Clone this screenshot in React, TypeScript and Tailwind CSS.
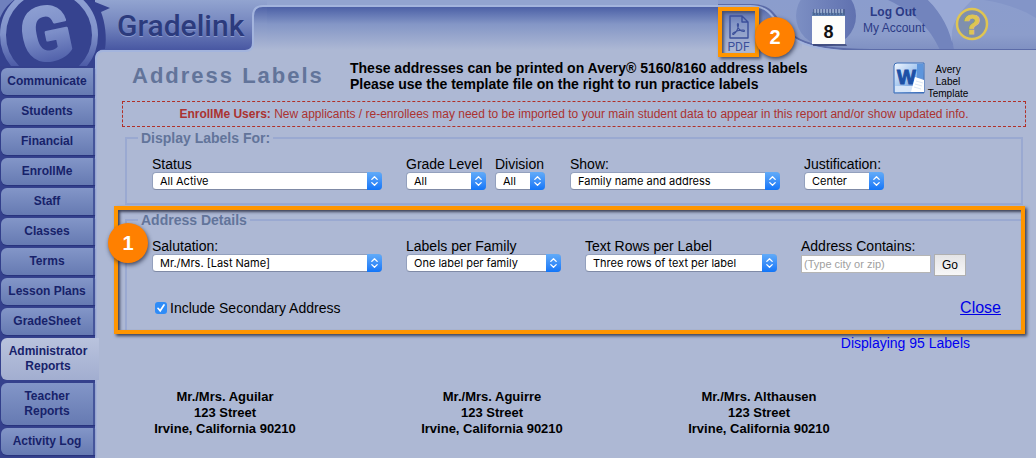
import React from 'react';
import clsx from 'clsx';

interface NavItem {
  label: string;
  active?: boolean;
}

const navItems: NavItem[] = [
  { label: 'Communicate' },
  { label: 'Students' },
  { label: 'Financial' },
  { label: 'EnrollMe' },
  { label: 'Staff' },
  { label: 'Classes' },
  { label: 'Terms' },
  { label: 'Lesson Plans' },
  { label: 'GradeSheet' },
  { label: 'Administrator Reports', active: true },
  { label: 'Teacher Reports' },
  { label: 'Activity Log' },
];

const families = ['Mr./Mrs. Aguilar', 'Mr./Mrs. Aguirre', 'Mr./Mrs. Althausen'];

interface SelectFieldProps {
  id: string;
  label: string;
  value: string;
  className: string;
}

const SelectField: React.FC<SelectFieldProps> = ({ id, label, value, className }) => (
  <div className={className}>
    <label htmlFor={id} className="block whitespace-nowrap text-[14px] leading-4">
      {label}
    </label>
    <div className="relative h-[18px]">
      <select
        id={id}
        className="block h-[18px] w-full appearance-none rounded-[4px] border border-[#93a0bd] border-b-[#7f8aa6] bg-white pr-4 pl-[7px] font-[Inter,sans-serif] text-[11px] leading-4 text-black"
      >
        <option>{value}</option>
      </select>
      <span className="pointer-events-none absolute top-0 right-0 flex h-[18px] w-[15px] items-center justify-center rounded-r-[4px] bg-linear-to-b from-[#62abf8] to-[#0f75f8]">
        <svg viewBox="0 0 9 12" className="h-3 w-[9px]" fill="none" stroke="white" strokeWidth="1.3" strokeLinecap="round" strokeLinejoin="round">
          <path d="M1.8 4.4 4.5 1.7 7.2 4.4M1.8 7.6l2.7 2.7 2.7-2.7" />
        </svg>
      </span>
    </div>
  </div>
);

const Badge: React.FC<{ children: React.ReactNode; className: string }> = ({ children, className }) => (
  <span
    className={clsx(
      'absolute z-20 flex size-10 items-center justify-center rounded-full bg-[#ff8000] text-[20px] font-bold text-white shadow-[1px_2px_4px_rgba(20,25,50,0.7)]',
      className
    )}
  >
    {children}
  </span>
);

const Logo = () => (
  <svg viewBox="0 0 120 66" className="pointer-events-none absolute top-0 left-0 z-20 h-[66px] w-[120px]" aria-hidden="true">
    <defs>
      <linearGradient id="logoRing" x1="0" y1="0" x2="0" y2="66" gradientUnits="userSpaceOnUse">
        <stop offset="0" stopColor="#8d9fd2" />
        <stop offset="0.5" stopColor="#8092ca" />
        <stop offset="1" stopColor="#4c5ba6" />
      </linearGradient>
      <linearGradient id="logoLetter" x1="0" y1="-30" x2="0" y2="30" gradientUnits="userSpaceOnUse">
        <stop offset="0" stopColor="#8d9fd2" />
        <stop offset="0.5" stopColor="#7c8ec8" />
        <stop offset="1" stopColor="#4f5fa9" />
      </linearGradient>
    </defs>
    <path d="M0 0h90l20 8-9 4c4 10 6 25 4 37-5 0-10 3-10 9v8H0z" fill="#35428f" />
    <circle cx="49" cy="35" r="46" fill="#36438f" stroke="url(#logoRing)" strokeWidth="6" />
    <path d="M0 0h14C7 5 3 11 0 18z" fill="#6f80bd" />
    <text
      x="0"
      y="26"
      transform="translate(46 34) rotate(-12)"
      textAnchor="middle"
      fontFamily="Roboto, sans-serif"
      fontWeight="700"
      fontSize="74"
      fill="url(#logoLetter)"
      stroke="url(#logoLetter)"
      strokeWidth="3"
      strokeLinejoin="round"
    >
      G
    </text>
  </svg>
);

// S-shaped step between the brand strip and the raised tab
const HeaderStep = () => (
  <svg viewBox="0 0 24 54" className="relative z-10 h-[54px] w-6 shrink-0" aria-hidden="true">
    <defs>
      <linearGradient id="stepBar" x1="0" y1="0" x2="0" y2="50" gradientUnits="userSpaceOnUse">
        <stop offset="0" stopColor="#92a4d0" />
        <stop offset="0.5" stopColor="#7485be" />
        <stop offset="1" stopColor="#4857a2" />
      </linearGradient>
      <linearGradient id="stepTab" x1="0" y1="6" x2="0" y2="50" gradientUnits="userSpaceOnUse">
        <stop offset="0" stopColor="#4c60a6" />
        <stop offset="0.4" stopColor="#8496c6" />
        <stop offset="1" stopColor="#adb8d4" />
      </linearGradient>
    </defs>
    <path d="M0 50h2q8 0 8-8V16q0-10 10-10h4v48H0z" fill="url(#stepTab)" />
    <path d="M0 0h24v6h-4q-10 0-10 10v26q0 8-8 8H0z" fill="url(#stepBar)" />
    <path d="M0 51h2q8 0 8-8V16q0-10 10-10h4" fill="none" stroke="#a3b4dd" strokeWidth="2" />
  </svg>
);

const HeaderSwoosh = () => (
  <svg viewBox="0 0 318 58" className="absolute top-0 right-0 h-[58px] w-[318px]" aria-hidden="true">
    <defs>
      <linearGradient id="swooshTab" x1="0" y1="6" x2="0" y2="50" gradientUnits="userSpaceOnUse">
        <stop offset="0" stopColor="#4c60a6" />
        <stop offset="0.4" stopColor="#8496c6" />
        <stop offset="1" stopColor="#adb8d4" />
      </linearGradient>
      <linearGradient id="swooshBar" x1="0" y1="0" x2="0" y2="50" gradientUnits="userSpaceOnUse">
        <stop offset="0" stopColor="#8b9dcd" />
        <stop offset="0.7" stopColor="#8c9dcb" />
        <stop offset="1" stopColor="#7f90c2" />
      </linearGradient>
      <linearGradient id="swooshDisc" x1="70" y1="0" x2="140" y2="0" gradientUnits="userSpaceOnUse">
        <stop offset="0" stopColor="#8093c6" />
        <stop offset="1" stopColor="#5f70af" />
      </linearGradient>
      <clipPath id="swooshClip">
        <path d="M0 0h318v50H152C122 50 98 48 82 40 56 28 62 5 34 5H0z" />
      </clipPath>
    </defs>
    <path d="M0 5h90v45H0z" fill="url(#swooshTab)" />
    <path d="M84 36h70v18H84z" fill="#adb8d4" />
    <g clipPath="url(#swooshClip)">
      <path d="M0 0h318v50H0z" fill="url(#swooshBar)" />
      <circle cx="108" cy="16" r="30" fill="url(#swooshDisc)" />
      <path d="M170 0h40c15 14 24 32 26 50h-14C212 28 196 12 170 0z" fill="#7284bd" />
      <path d="M210 0h44c-8 8-14 14-18 24-3 8-3 16 0 26-4-20-12-36-26-50z" fill="#99a9d5" />
      <path d="M266 0h52v18C302 8 284 3 266 0z" fill="#8395c8" />
    </g>
    <path d="M0 5h34c28 0 22 23 48 35 16 8 40 10 70 10h166" fill="none" stroke="#5b6ba8" strokeWidth="2" />
    <path d="M0 6h32c28 0 22 23 48 35 16 8 40 11 70 11h168" fill="none" stroke="#a3b4dd" strokeWidth="2" />
  </svg>
);

const PdfIcon = () => (
  <svg viewBox="0 0 20 24" className="h-6 w-5" fill="none" stroke="#3b4f9a" strokeWidth="1.4" strokeLinejoin="round" aria-hidden="true">
    <path d="M1 1h12l6 6v16H1zM13 1v6h6" />
    <path d="M4.500 19.500c2.500-1.500 4.800-6 5-9.500.1-1.800-1.200-1.800-1.200 0 .2 3.500 3.700 6.500 6.200 6.500 1.500 0 1.200-1.400-.2-1.500-3.500-.2-7.300 1-9.800 2.800-1.200.8-1 2 0 1.700z" strokeWidth="1.1" />
  </svg>
);

const CalendarIcon = () => (
  <svg viewBox="0 0 38 38" className="h-[38px] w-[38px]" aria-hidden="true">
    <path d="M3 36h33l1 2H3z" fill="#26305f" opacity="0.6" />
    <path d="M2 4h33v32H2z" fill="#fdfdfb" />
    <path d="M2 4h33v4H2z" fill="#5f7fae" />
    <path d="M4 1v6M7 1v6M10 1v6M13 1v6M16 1v6M19 1v6M22 1v6M25 1v6M28 1v6M31 1v6M34 1v6" stroke="#3d4f7c" strokeWidth="1" />
    <path d="M5 1v4M8 1v4M11 1v4M14 1v4M17 1v4M20 1v4M23 1v4M26 1v4M29 1v4M32 1v4" stroke="#c3d4e8" strokeWidth="1" />
    <text x="18.5" y="30" textAnchor="middle" fontFamily="Liberation Sans, sans-serif" fontWeight="700" fontSize="18" fill="#111">
      8
    </text>
  </svg>
);

const WordIcon = () => (
  <svg viewBox="0 0 32 32" className="size-8" aria-hidden="true">
    <defs>
      <linearGradient id="wordBg" x1="0" y1="0" x2="1" y2="1">
        <stop offset="0" stopColor="#f2f7ff" />
        <stop offset="0.5" stopColor="#9fc3ee" />
        <stop offset="1" stopColor="#2c62b8" />
      </linearGradient>
    </defs>
    <path d="M4 1h27v30H1V4q0-3 3-3z" fill="url(#wordBg)" stroke="#3d6fb8" />
    <path d="M24 2h6v14h-6z" fill="#5d95dc" />
    <path d="M2 24h19v6H2z" fill="#d5e4f8" />
    <text x="4" y="22" fontFamily="Liberation Sans, sans-serif" fontWeight="700" fontSize="20" fill="#1c50a6" stroke="#1c50a6">
      W
    </text>
    <path d="m22 15 9 3v12H18z" fill="#fff" />
    <path d="m23 19 7 2m-8 1 7 2m-8 1 7 2" stroke="#dbe6f5" />
  </svg>
);

const HelpIcon = () => (
  <svg viewBox="0 0 34 34" className="size-[34px]" aria-hidden="true">
    <circle cx="17" cy="17" r="15" fill="#7f8fae" stroke="#dfc552" strokeWidth="2.5" />
    <text
      x="17"
      y="27"
      textAnchor="middle"
      fontFamily="Liberation Sans, sans-serif"
      fontWeight="700"
      fontSize="28"
      fill="#dfc552"
      stroke="#dfc552"
    >
      ?
    </text>
  </svg>
);

const Sidebar = () => (
  <nav className="z-10 flex w-[95px] shrink-0 flex-col gap-[3px] bg-[#35418d] pt-[68px] pb-[3px] pl-px">
    {navItems.map((item) => (
      <a
        key={item.label}
        href="#"
        className={clsx(
          'flex flex-col justify-center rounded-l-[6px] px-1 py-[6px] text-center text-[12px] leading-[15px] font-bold text-[#17226a]',
          item.active
            ? '-mr-1 bg-linear-to-b from-[#b9c3dd] to-[#a2aed0] pr-2'
            : 'border-r-2 border-[#45559b] bg-linear-to-b from-[#8396c8] to-[#667ab2] shadow-[0_1px_1px_#27327c]'
        )}
      >
        {item.label}
      </a>
    ))}
  </nav>
);

const Header = () => (
  <header className="relative flex h-[50px]">
    <div className="w-[148px] shrink-0 bg-linear-to-b from-[#92a4d0] via-[#7485be] to-[#4857a2] pl-[22px]">
      <a href="#" className="relative z-30 block pt-2 font-[Roboto,sans-serif] text-[30px] leading-9 font-medium text-[#2c3b7d] [text-shadow:0_1px_0_#8a9ad0]">
        Gradelink
      </a>
    </div>
    <HeaderStep />
    <div className="flex-1 bg-[#92a4d0] pt-[5px]">
      <div className="h-[45px] border-t-2 border-[#a3b4dd] bg-linear-to-b from-[#4c60a6] via-[#8496c6] via-40% to-[#adb8d4]" />
    </div>
    <div className="relative flex w-[318px] shrink-0 items-start">
      <HeaderSwoosh />
      <div className="relative z-10 mt-[7px]">
        <button
          type="button"
          className="flex h-[50px] w-[41px] flex-col items-center border-4 border-[#ff9500] pt-1 text-[12px] leading-3 text-[#3b4f9a] shadow-[2px_2px_3px_#4a5270,inset_2px_2px_3px_#4a5270]"
        >
          <PdfIcon />
          <span className="pt-0.5 font-[Roboto,sans-serif]">PDF</span>
        </button>
        <Badge className="top-[10px] left-[37px]">2</Badge>
      </div>
      <a href="#" className="relative mt-2 ml-[51px]" aria-label="Calendar">
        <CalendarIcon />
      </a>
      <div className="relative flex flex-1 flex-col pt-1 pr-[30px] text-right text-[12px] leading-4 text-[#2b3b86]">
        <a href="#" className="pr-[9px] font-bold">Log Out</a>
        <a href="#">My Account</a>
      </div>
      <a href="#" className="relative mt-[7px] mr-[47px]" aria-label="Help">
        <HelpIcon />
      </a>
    </div>
  </header>
);

export default function App() {
  return (
    <div className="relative flex min-h-screen overflow-hidden bg-[#4857a2] font-['Liberation_Sans',Arial,sans-serif] text-black">
      <Logo />
      <Sidebar />
      <div className="flex min-w-0 flex-1 flex-col">
        <Header />
        <main className="relative flex-1 rounded-tl-[8px] border-l-2 border-[#a3b1d8] bg-[#adb8d4] pr-[10px] pb-5 pl-[25px]">
          <span className="pointer-events-none absolute top-0 -left-0.5 h-6 w-[150px] rounded-tl-[8px] border-t-2 border-l-2 border-[#a3b4dd]" />
          <div className="flex items-start pt-[10px]">
            <h1 className="w-[228px] pt-1 pl-[10px] text-[22px] leading-6 font-bold tracking-[2px] whitespace-nowrap text-[#62749a]">
              Address Labels
            </h1>
            <p className="flex-1 text-[14px] leading-4 font-bold">
              These addresses can be printed on Avery® 5160/8160 address labels
              <br />
              Please use the template file on the right to run practice labels
            </p>
            <a href="#" className="mr-[57px] flex gap-0.5 pt-[2px] text-center text-[10px] leading-3">
              <WordIcon />
              <span className="w-[42px] pt-0.5">Avery Label Template</span>
            </a>
          </div>

          <p className="mt-[1px] border border-dashed border-[#b03028] text-center text-[12px] leading-6 text-[#ab3230]">
            <strong>EnrollMe Users:</strong> New applicants / re-enrollees may need to be imported to your main student data to appear in this report and/or show updated info.
          </p>

          <fieldset className="mt-[3px] mr-[3px] ml-[3px] border-2 border-[#9aa9d1] pt-[10px] pb-[13px] pl-[25px]">
            <legend className="-ml-[14px] px-[3px] text-[14px] leading-4 font-bold text-[#62749a]">Display Labels For:</legend>
            <div className="flex">
              <SelectField id="status" label="Status" value="All Active" className="mr-6 w-[230px]" />
              <SelectField id="grade" label="Grade Level" value="All" className="mr-[9px] w-20" />
              <SelectField id="division" label="Division" value="All" className="mr-[25px] w-[50px]" />
              <SelectField id="show" label="Show:" value="Family name and address" className="mr-6 w-[210px]" />
              <SelectField id="justification" label="Justification:" value="Center" className="w-20" />
            </div>
          </fieldset>

          <div className="relative mt-[7px] mr-[3px] ml-[3px]">
            <fieldset className="border-2 border-b-0 border-[#9aa9d1] pt-[10px] pb-[11px] pl-[25px]">
              <legend className="-ml-[14px] px-[3px] text-[14px] leading-4 font-bold text-[#62749a]">Address Details</legend>
              <div className="flex">
                <SelectField id="salutation" label="Salutation:" value="Mr./Mrs. [Last Name]" className="mr-6 w-[230px]" />
                <SelectField id="perFamily" label="Labels per Family" value="One label per family" className="mr-6 w-[155px]" />
                <SelectField id="textRows" label="Text Rows per Label" value="Three rows of text per label" className="mr-6 w-48" />
                <div>
                  <label htmlFor="contains" className="block text-[14px] leading-4">Address Contains:</label>
                  <div className="flex gap-[3px]">
                    <input
                      id="contains"
                      type="text"
                      placeholder="(Type city or zip)"
                      className="mt-px h-[18px] w-[130px] border border-[#b5b5b5] bg-white px-0.5 text-[11px] placeholder:text-[#a0a0a0]"
                    />
                    <button type="button" className="h-[22px] w-8 border border-[#b0b0b0] bg-linear-to-b from-[#e4e4e6] to-[#f7f7f7] text-[12px] leading-4">
                      Go
                    </button>
                  </div>
                </div>
              </div>
              <div className="flex items-center justify-between pt-[21px] pr-5 pl-[3px]">
                <label className="flex items-center gap-[3px] text-[14px] leading-[22px]">
                  <input
                    type="checkbox"
                    defaultChecked
                    className="peer size-3 appearance-none rounded-[3px] bg-[#2f8cf7]"
                  />
                  <svg viewBox="0 0 12 12" className="pointer-events-none -ml-[15px] hidden size-3 peer-checked:block" fill="none" stroke="white" strokeWidth="1.7" strokeLinecap="round" aria-hidden="true">
                    <path d="m3 6.300 2.200 2.500L9 3" />
                  </svg>
                  Include Secondary Address
                </label>
                <a href="#" className="text-[16px] leading-[22px] text-[#0000e6] underline">Close</a>
              </div>
            </fieldset>
            <div className="pointer-events-none absolute -top-[6px] -right-[2px] -bottom-1 -left-[11px] border-4 border-[#ff9500] shadow-[2px_2px_3px_#3d4258,inset_2px_2px_3px_#3d4258]" />
            <Badge className="top-[11px] -left-[17px]">1</Badge>
          </div>

          <p className="mt-[5px] mr-14 text-right text-[14px] leading-4 text-[#0000f0]">Displaying 95 Labels</p>

          <div className="mt-[38px] mr-[164px] grid grid-cols-3 gap-[61px] text-center text-[13px] leading-4 font-bold">
            {families.map((family) => (
              <address key={family} className="whitespace-nowrap not-italic">
                {family}
                <br />
                123 Street
                <br />
                Irvine, California 90210
              </address>
            ))}
          </div>
        </main>
      </div>
    </div>
  );
}
